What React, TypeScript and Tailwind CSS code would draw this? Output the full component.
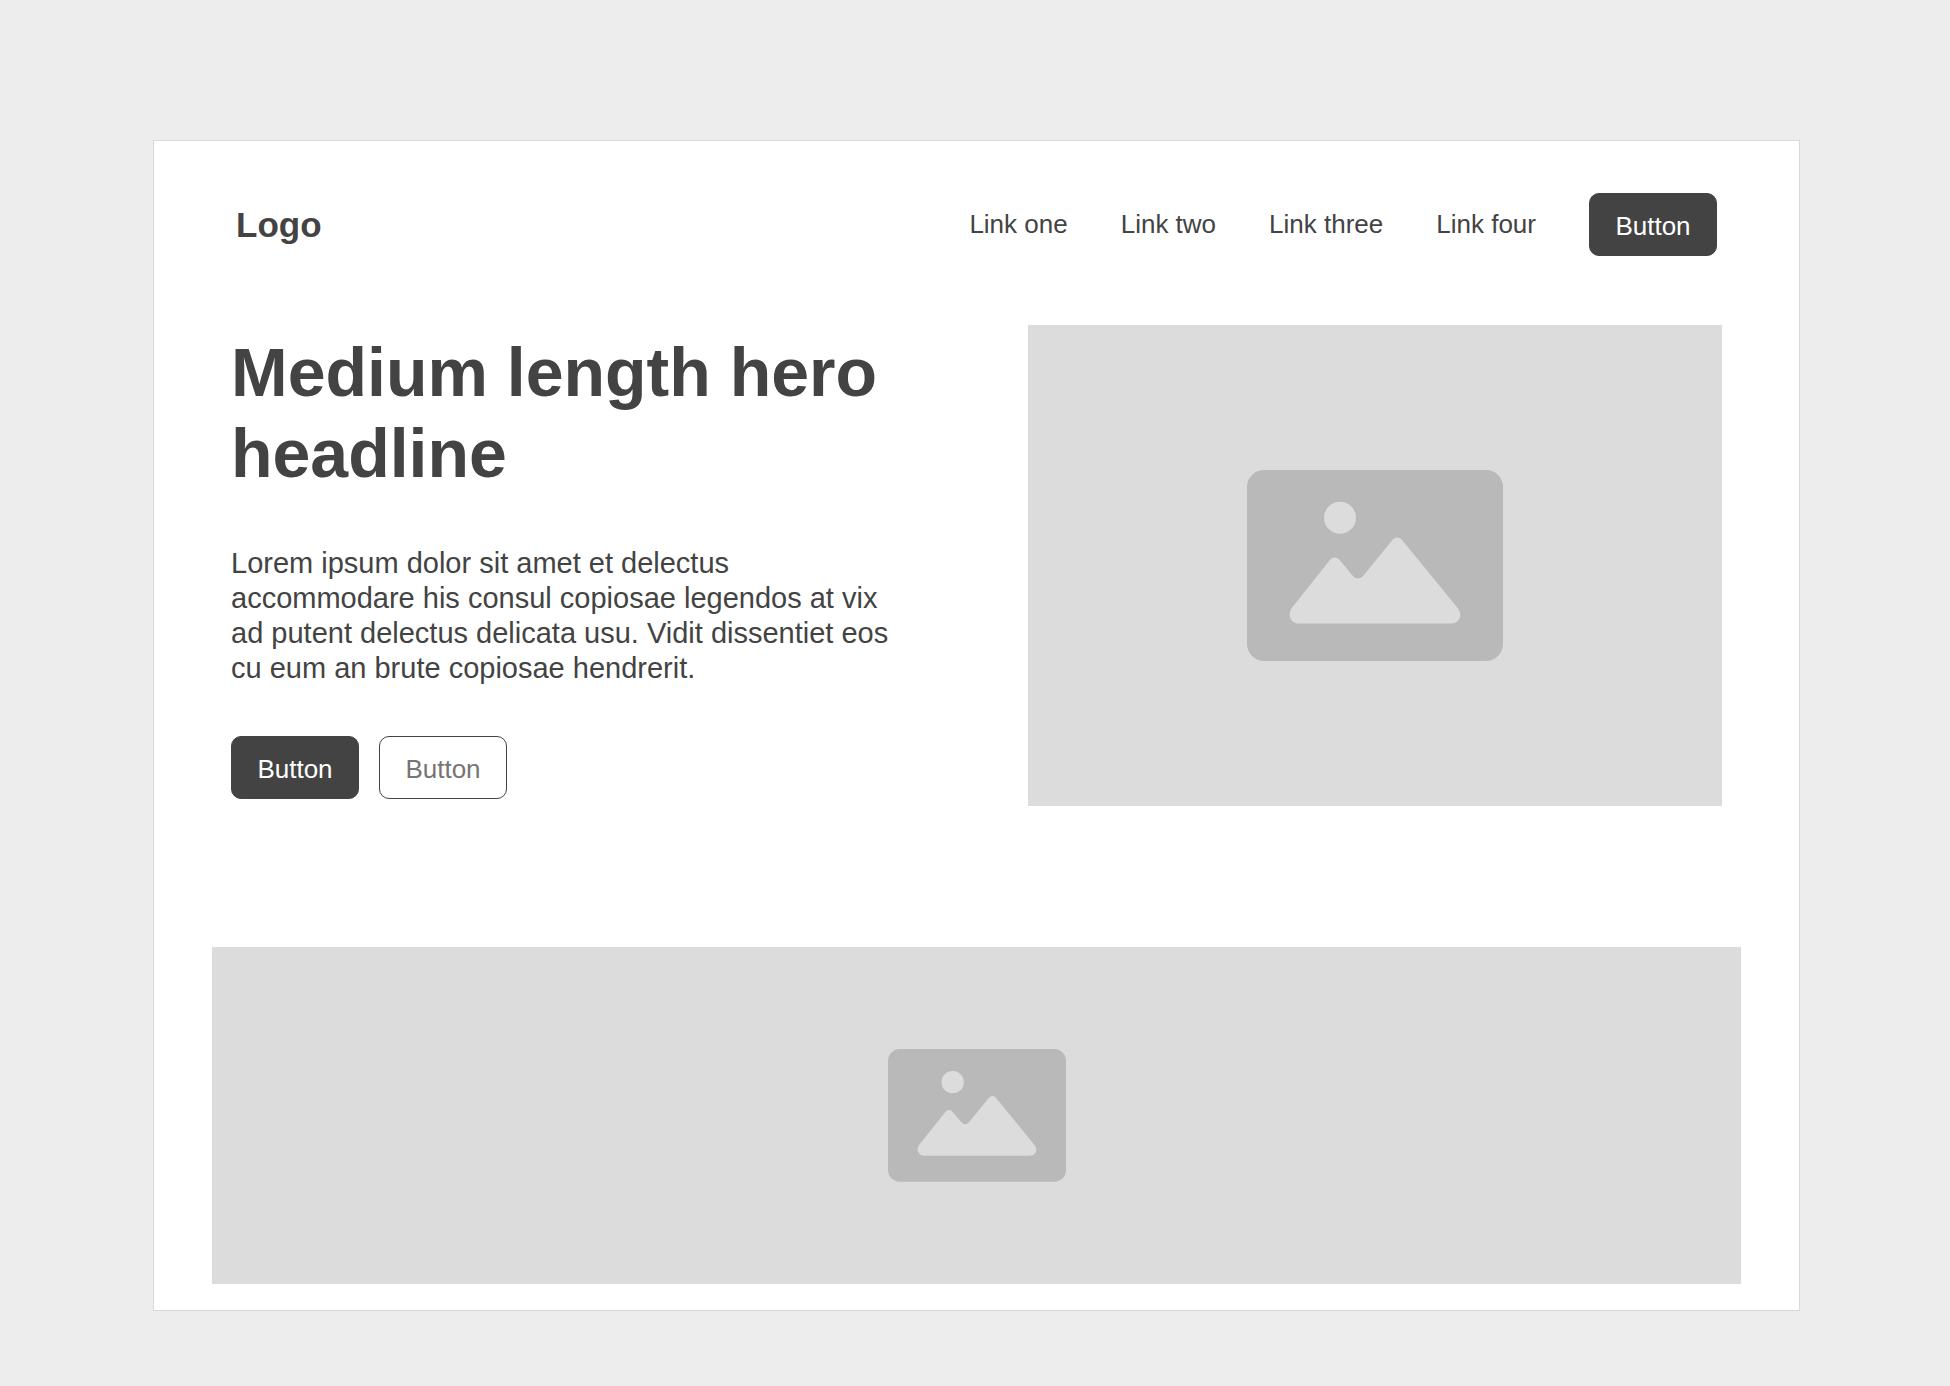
const links = ["Link one", "Link two", "Link three", "Link four"];

export default function App() {
  return (
    <div className="min-h-screen bg-[#ededed] pb-[74px] pl-[153px] pr-[150px] pt-[140px] font-['Liberation_Sans',Arial,sans-serif] text-[#434343]">
      <div className="border border-[#d9d9d9] bg-white pb-[26px]">
        <header className="flex items-center justify-between pl-[82px] pr-[82px] pt-[52px]">
          <a href="#" className="text-[35px] font-bold leading-10">
            Logo
          </a>
          <nav className="flex items-center gap-[53px] text-[26px]">
            {links.map((label) => (
              <a key={label} href="#" className="whitespace-nowrap">
                {label}
              </a>
            ))}
            <Button />
          </nav>
        </header>

        <section className="flex items-start justify-between px-[77px] pt-[69px]">
          <div className="w-[46%] pt-[7px]">
            <h1 className="text-[68px] font-bold leading-[81px]">Medium length hero headline</h1>
            <p className="mt-[52px] text-[29px] leading-[35px]">
              Lorem ipsum dolor sit amet et delectus accommodare his consul copiosae legendos at vix ad
              putent delectus delicata usu. Vidit dissentiet eos cu eum an brute copiosae hendrerit.
            </p>
            <div className="mt-[50px] flex gap-5">
              <Button />
              <Button outline />
            </div>
          </div>
          <div className="flex aspect-[694/481] w-[694px] items-center justify-center bg-[#dcdcdc]">
            <ImagePlaceholder className="w-64" />
          </div>
        </section>

        <section className="px-[58px] pt-[141px]">
          <div className="flex h-[337px] items-center justify-center bg-[#dcdcdc]">
            <ImagePlaceholder className="w-[178px]" />
          </div>
        </section>
      </div>
    </div>
  );
}

function Button({ outline }: { outline?: boolean }) {
  return (
    <button
      type="button"
      className={`h-[63px] w-32 rounded-[10px] border border-[#434343] pt-1 text-[26px] ${
        outline ? "bg-white text-[#757575]" : "bg-[#434343] text-white"
      }`}
    >
      Button
    </button>
  );
}

function ImagePlaceholder({ className }: { className: string }) {
  return (
    <svg viewBox="0 0 256 191" className={className} aria-hidden="true">
      <rect width="256" height="191" rx="17" fill="#b9b9b9" />
      <circle cx="93" cy="47.8" r="16" fill="#dcdcdc" />
      <path
        d="M51.7 153.5C44 153.5 39.5 144.5 45.5 137L82.5 90.5C85.3 86.6 90 86.6 93 90.5L105.5 105.5C108.5 109.3 113.5 109.3 116.5 105.5L145 70.5C148 66.6 152.5 66.6 155.5 70.5L210.7 138C216.5 145.5 212 153.5 204 153.5Z"
        fill="#dcdcdc"
      />
    </svg>
  );
}
